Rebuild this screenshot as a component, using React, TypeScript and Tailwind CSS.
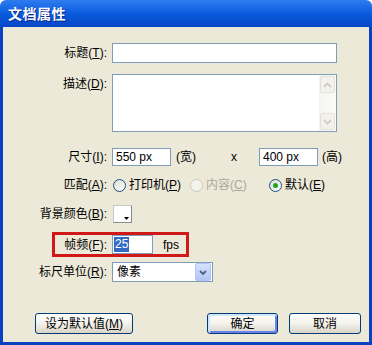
import React from 'react'

const font = "font-['Liberation_Sans','Noto_Sans_CJK_SC',sans-serif]"

function Label({ text, k, className = '' }: { text: string; k: string; className?: string }) {
  return (
    <div className={`w-[104px] shrink-0 text-right text-[12px] leading-[14px] text-black ${className}`}>
      {text}(<span className="underline">{k}</span>):
    </div>
  )
}

function Radio({ checked, disabled }: { checked?: boolean; disabled?: boolean }) {
  return (
    <div
      className={`w-[13px] h-[13px] rounded-full border flex items-center justify-center ${
        disabled ? 'border-[#CAC8BB] bg-[#F4F3EE]' : 'border-[#1C5180] bg-gradient-to-br from-[#DCDBD5] to-white'
      }`}
    >
      {checked && <div className="w-[5px] h-[5px] rounded-full bg-[#21A121]" />}
    </div>
  )
}

function XpButton({ children, def, className = '' }: { children: React.ReactNode; def?: boolean; className?: string }) {
  return (
    <div
      className={`h-[21px] rounded-[3px] border border-[#003C74] bg-gradient-to-b from-white via-[#F3F2EC] to-[#D9D4C8] flex items-center justify-center text-[12px] text-black ${
        def ? 'shadow-[inset_1px_1px_0_1px_#CEE7FF,inset_-1px_-1px_0_1px_#6982EE]' : ''
      } ${className}`}
    >
      {children}
    </div>
  )
}

export default function App() {
  return (
    <div className={`w-[372px] h-[345px] flex flex-col ${font}`}>
      {/* 标题栏 */}
      <div className="h-[27px] shrink-0 rounded-t-[6px] bg-gradient-to-b from-[#2F7CF0] via-[#0A5BDE] to-[#0646C6] flex items-center pl-[8px]">
        <span className="text-white font-bold text-[14px] tracking-[0.5px] font-['Noto_Sans_CJK_SC',sans-serif] [text-shadow:1px_1px_0_#0A2A8C]">
          文档属性
        </span>
      </div>

      {/* 内容 */}
      <div className="flex-1 flex flex-col bg-[#ECE9D8] border-x-[3px] border-b-[3px] border-[#0842C0]">
        {/* 标题 */}
        <div className="mt-[16px] flex items-center">
          <Label text="标题" k="T" />
          <div className="ml-[5px] w-[225px] h-[20px] border border-[#7F9DB9] bg-white" />
        </div>

        {/* 描述 */}
        <div className="mt-[11px] flex items-start">
          <Label text="描述" k="D" className="pt-[3px]" />
          <div className="ml-[5px] w-[225px] h-[58px] border border-[#7F9DB9] bg-white flex justify-end">
            <div className="w-[17px] flex flex-col bg-gradient-to-r from-[#F4F4F0] to-[#FBFBF8]">
              <div className="h-[17px] m-px rounded-[2px] border border-[#E3E2DA] bg-[#F2F1EB] flex items-center justify-center">
                <svg width="9" height="6" viewBox="0 0 9 6">
                  <path d="M1 5 L4.5 1.5 L8 5" stroke="#C9C7BA" strokeWidth="1.6" fill="none" />
                </svg>
              </div>
              <div className="flex-1" />
              <div className="h-[17px] m-px rounded-[2px] border border-[#E3E2DA] bg-[#F2F1EB] flex items-center justify-center">
                <svg width="9" height="6" viewBox="0 0 9 6">
                  <path d="M1 1 L4.5 4.5 L8 1" stroke="#C9C7BA" strokeWidth="1.6" fill="none" />
                </svg>
              </div>
            </div>
          </div>
        </div>

        {/* 尺寸 */}
        <div className="mt-[16px] flex items-center text-[12px]">
          <Label text="尺寸" k="I" />
          <div className="ml-[5px] w-[59px] h-[18px] border border-[#7F9DB9] bg-white px-[3px] flex items-center">550 px</div>
          <span className="w-[58px] pl-[5px]">(宽)</span>
          <span className="w-[10px] text-center">x</span>
          <div className="ml-[20px] w-[59px] h-[18px] border border-[#7F9DB9] bg-white px-[3px] flex items-center">400 px</div>
          <span className="pl-[4px]">(高)</span>
        </div>

        {/* 匹配 */}
        <div className="mt-[10px] h-[18px] flex items-center text-[12px]">
          <Label text="匹配" k="A" />
          <div className="ml-[6px] w-[77px] flex items-center gap-[3px]">
            <Radio />
            <span>
              打印机(<span className="underline">P</span>)
            </span>
          </div>
          <div className="w-[79px] flex items-center gap-[3px] text-[#ACA899]">
            <Radio disabled />
            <span>
              内容(<span className="underline">C</span>)
            </span>
          </div>
          <div className="flex items-center gap-[3px]">
            <Radio checked />
            <span>
              默认(<span className="underline">E</span>)
            </span>
          </div>
        </div>

        {/* 背景颜色 */}
        <div className="mt-[11px] flex items-center">
          <Label text="背景颜色" k="B" />
          <div className="ml-[6px] relative w-[19px] h-[18px] border border-[#8B8B88] border-t-[#C8C8C4] border-l-[#C8C8C4] bg-white">
            <svg className="absolute right-[2px] bottom-[2px]" width="5" height="3" viewBox="0 0 5 3">
              <path d="M0 0 H5 L2.5 3 Z" fill="#000" />
            </svg>
          </div>
        </div>

        {/* 帧频 */}
        <div className="mt-[12px] relative flex items-center text-[12px]">
          <Label text="帧频" k="F" />
          <div className="ml-[5px] w-[41px] h-[19px] border border-[#7F9DB9] bg-white pl-[1px] flex items-center">
            <span className="bg-[#316AC5] text-white leading-[15px] px-px">25</span>
          </div>
          <span className="ml-[10px]">fps</span>
          {/* 红色标注框 */}
          <div className="absolute left-[49px] top-[-3px] w-[137px] h-[25px] border-[3px] border-[#D01818] pointer-events-none" />
        </div>

        {/* 标尺单位 */}
        <div className="mt-[8px] flex items-center text-[12px]">
          <Label text="标尺单位" k="R" />
          <div className="ml-[5px] w-[101px] h-[20px] border border-[#7F9DB9] bg-white flex items-center justify-between">
            <span className="pl-[4px]">像素</span>
            <div className="w-[16px] h-[18px] mr-px rounded-[2px] border border-[#B1C5F5] bg-gradient-to-b from-[#D5E2FD] to-[#B2C6F5] flex items-center justify-center">
              <svg width="8" height="5" viewBox="0 0 8 5">
                <path d="M1 1 L4 4 L7 1" stroke="#4D6185" strokeWidth="1.8" fill="none" />
              </svg>
            </div>
          </div>
        </div>

        {/* 按钮 */}
        <div className="mt-[31px] flex items-center">
          <XpButton className="ml-[32px] w-[98px]">
            <span>
              设为默认值(<span className="underline">M</span>)
            </span>
          </XpButton>
          <XpButton def className="ml-[74px] w-[71px]">
            确定
          </XpButton>
          <XpButton className="ml-[11px] w-[72px]">取消</XpButton>
        </div>
      </div>
    </div>
  )
}
